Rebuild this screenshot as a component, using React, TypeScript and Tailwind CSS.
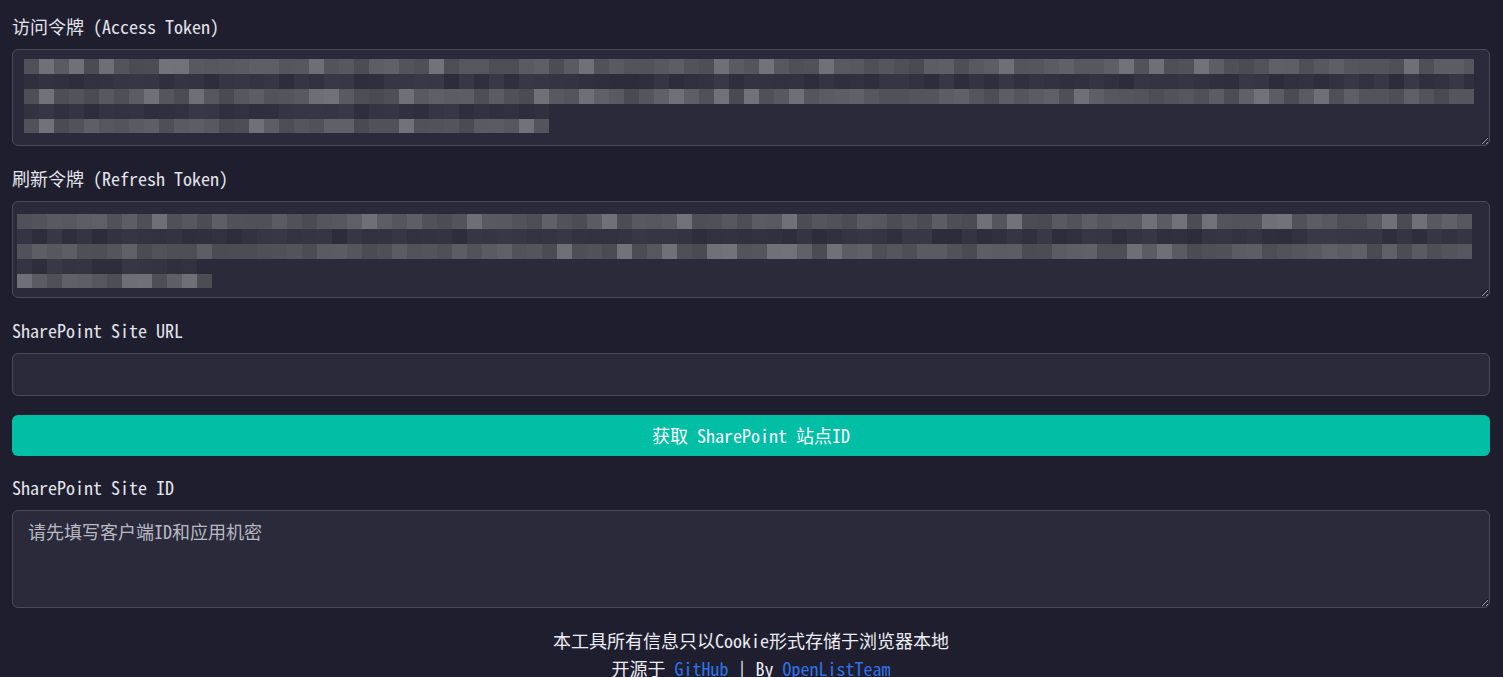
import React from "react";

const FONT = { fontFamily: '"Noto Sans Mono CJK SC", "Noto Sans CJK SC", monospace' };

function rng(seed: number) {
  let s = seed;
  return () => {
    s = (s * 1664525 + 1013904223) % 4294967296;
    return s / 4294967296;
  };
}

type Row = { end: number; light: boolean; h: number };

// mosaic used to redact the token text
function Mosaic({ x, y, rows, seed }: { x: number; y: number; rows: Row[]; seed: number }) {
  const r = rng(seed);
  const rects: React.ReactNode[] = [];
  let top = y;
  rows.forEach((row, ri) => {
    for (let bx = x; bx < row.end; bx += 15) {
      const v = r();
      const w = Math.min(15, row.end - bx);
      let c: string;
      if (row.light) {
        const g = Math.round(74 + v * 26 + (v > 0.85 ? 14 : 0));
        c = `rgb(${g},${g},${g + 9})`;
      } else {
        const g = Math.round(45 + v * 12);
        c = `rgb(${g},${g - 1},${g + 13})`;
      }
      rects.push(<rect key={`${ri}-${bx}`} x={bx} y={top} width={w} height={row.h} fill={c} />);
    }
    top += row.h;
  });
  return (
    <svg className="pointer-events-none absolute left-0 top-0" width="1478" height="98">
      {rects}
    </svg>
  );
}

function Label({ children }: { children: React.ReactNode }) {
  return <div className="mb-3 h-[22px] text-[18px] leading-[22px] text-[#e4e4ea]">{children}</div>;
}

const areaCls =
  "block h-[97px] w-full rounded-md border border-[#4a4a56] bg-[#2a2a3a] px-[15px] pt-2 pb-2.5 text-[18px] leading-6 text-[#b9b9c2] outline-none";

export default function App() {
  return (
    <div className="min-h-screen bg-[#1e1e2e] pl-3 pr-[13px] pt-[15px] text-[#e4e4ea]" style={FONT}>
      <div className="mb-[21px]">
        <Label>访问令牌 (Access Token)</Label>
        <div className="relative">
          <textarea className={areaCls} style={FONT} readOnly defaultValue="" />
          <Mosaic
            x={12}
            y={10}
            seed={7}
            rows={[
              { end: 1462, light: true, h: 15 },
              { end: 1462, light: false, h: 15 },
              { end: 1462, light: true, h: 15 },
              { end: 537, light: false, h: 15 },
              { end: 537, light: true, h: 14 },
            ]}
          />
        </div>
      </div>

      <div className="mb-[21px]">
        <Label>刷新令牌 (Refresh Token)</Label>
        <div className="relative">
          <textarea className={areaCls} style={FONT} readOnly defaultValue="" />
          <Mosaic
            x={5}
            y={13}
            seed={23}
            rows={[
              { end: 1460, light: true, h: 15 },
              { end: 1460, light: false, h: 15 },
              { end: 1460, light: true, h: 15 },
              { end: 185, light: false, h: 15 },
              { end: 200, light: true, h: 14 },
            ]}
          />
        </div>
      </div>

      <div className="mb-[19px]">
        <Label>SharePoint Site URL</Label>
        <input
          className="block h-[43px] w-full rounded-md border border-[#4a4a56] bg-[#2a2a3a] px-[15px] text-[18px] text-[#e4e4ea] outline-none"
          style={FONT}
        />
      </div>

      <button
        className="mb-5 block h-[41px] w-full rounded-md bg-[#00bfa5] text-[18px] text-white"
        style={FONT}
      >
        获取 SharePoint 站点ID
      </button>

      <div className="mb-[18px]">
        <Label>SharePoint Site ID</Label>
        <textarea
          className={areaCls + " h-[98px]"}
          style={FONT}
          readOnly
          defaultValue="请先填写客户端ID和应用机密"
        />
      </div>

      <footer className="text-center text-[18px] leading-7 text-[#ececf2]">
        <p>本工具所有信息只以Cookie形式存储于浏览器本地</p>
        <p>
          开源于{" "}
          <a href="#" className="text-[#2f72e8] underline">
            GitHub
          </a>{" "}
          | By{" "}
          <a href="#" className="text-[#2f72e8] underline">
            OpenListTeam
          </a>
        </p>
      </footer>
    </div>
  );
}
